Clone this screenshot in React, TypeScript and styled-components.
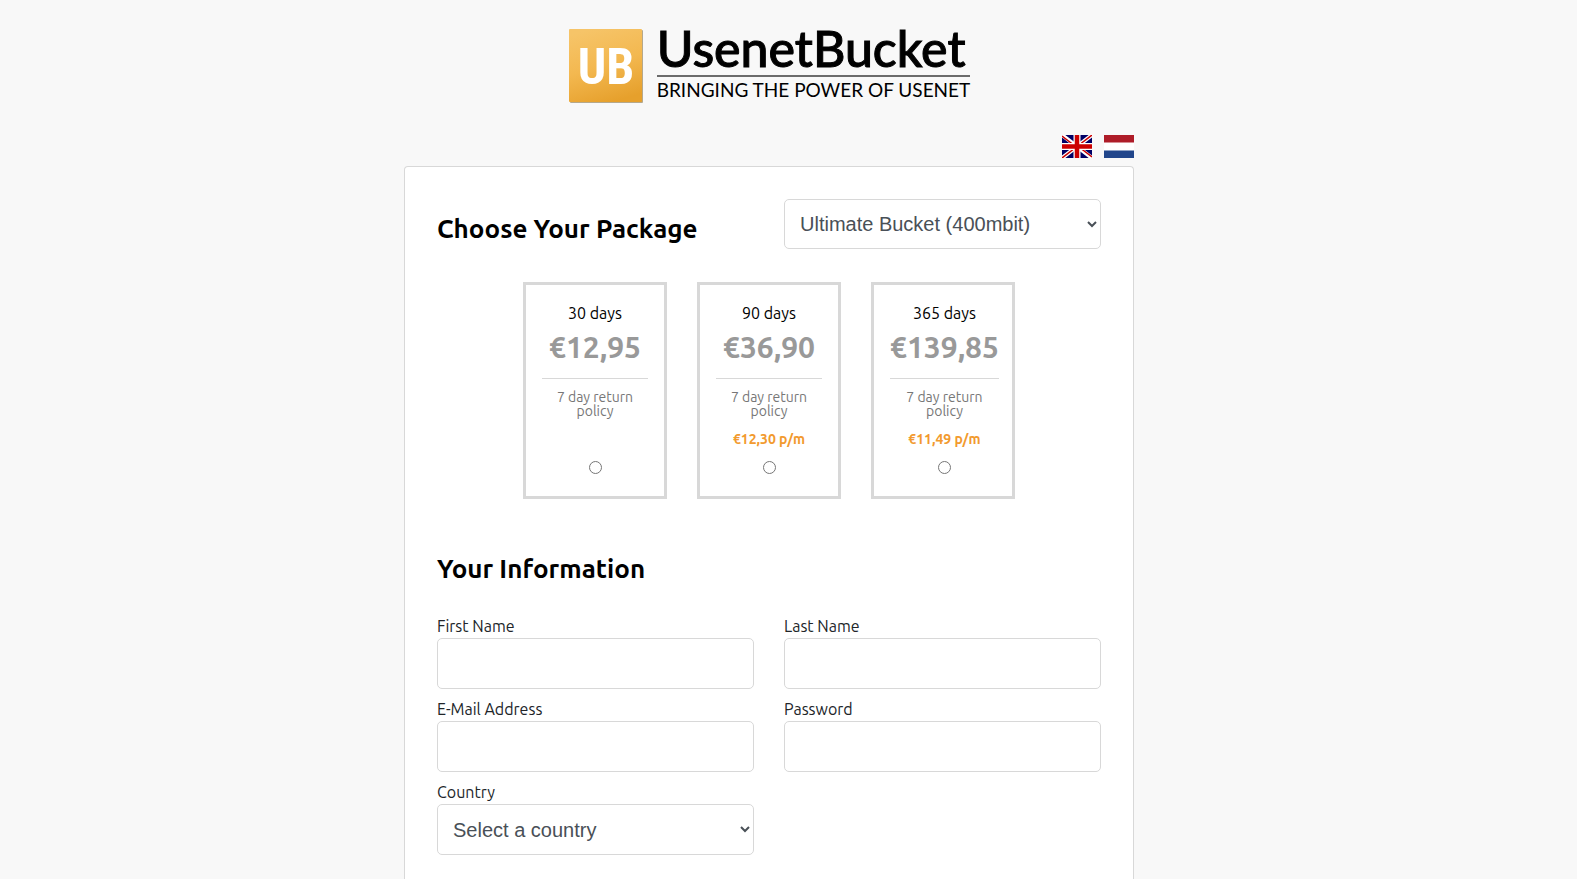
import React, { useState } from "react";
import styled, { createGlobalStyle } from "styled-components";

const GlobalStyle = createGlobalStyle`
  *, *::before, *::after { box-sizing: border-box; }
  body {
    margin: 0;
    background: #f8f8f8;
    color: #212529;
    font-family: Ubuntu, "Noto Sans", "Open Sans", sans-serif;
    font-size: 16px;
    line-height: 24px;
  }
`;

const Page = styled.div`
  display: flex;
  flex-direction: column;
  align-items: center;
  min-height: 100vh;
  padding: 28px 39px 0 0;
`;

const Brand = styled.a`
  display: flex;
  gap: 14px;
  color: #000;
  text-decoration: none;
`;

const BrandMark = styled.svg`
  display: block;
  width: 75px;
  height: 75px;
`;

const BrandInitials = styled.text`
  fill: #fff;
  font-family: "Liberation Sans Narrow", "Roboto Condensed", "Liberation Sans", sans-serif;
  font-size: 50px;
  font-weight: 700;
  text-anchor: middle;
`;

const BrandText = styled.span`
  display: flex;
  flex-direction: column;
  font-family: Lato, sans-serif;
  white-space: nowrap;
`;

const BrandName = styled.span`
  padding-bottom: 6px;
  border-bottom: 2px solid #6b6b6b;
  font-size: 50px;
  font-weight: 500;
  line-height: 41px;
  -webkit-text-stroke: 1px #000;
`;

const BrandTagline = styled.span`
  margin-top: 3px;
  font-size: 19px;
  font-weight: 400;
  line-height: 20px;
`;

const Container = styled.div`
  display: flex;
  flex: 1;
  flex-direction: column;
  width: 100%;
  max-width: 730px;
`;

const Languages = styled.nav`
  display: flex;
  justify-content: flex-end;
  gap: 12px;
  margin: 32px 0 8px;
`;

const LanguageLink = styled.a`
  display: block;
  width: 30px;
  height: 23px;

  svg { display: block; }
`;

const Card = styled.form`
  flex: 1;
  padding: 32px 32px 24px;
  border: 1px solid #d8d8d8;
  border-bottom: 0;
  border-radius: 4px 4px 0 0;
  background: #fff;
`;

const Columns = styled.div`
  display: grid;
  grid-template-columns: 1fr 1fr;
  gap: 8px 30px;
`;

const Heading = styled.h2`
  margin: 0;
  color: #000;
  font-size: 26px;
  font-weight: 700;
  line-height: 30px;
`;

const PackageHeading = styled(Heading)`
  padding-top: 15px;
`;

const Control = styled.input`
  display: block;
  width: 100%;
  height: 51px;
  padding: 0 15px;
  border: 1px solid #d8d8d8;
  border-radius: 5px;
  background: #fff;
  color: #495057;
  font-family: "Liberation Sans", Arial, sans-serif;
  font-size: 20px;
`;

const SelectControl = styled(Control)`
  padding: 0 0 0 11px;
`;

const PackageSelect = styled(SelectControl)`
  height: 50px;
`;

const Plans = styled.div`
  display: flex;
  justify-content: center;
  gap: 30px;
  margin: 33px 0 55px;
`;

const Plan = styled.label`
  display: grid;
  grid-template-columns: 1fr;
  align-content: start;
  width: 144px;
  height: 217px;
  padding: 16px;
  border: 3px solid #d8d8d8;
  text-align: center;
  cursor: pointer;
`;

const Duration = styled.span`
  color: #000;
  line-height: 24px;
`;

const Price = styled.span`
  padding: 5px 0 13px;
  border-bottom: 1px solid #d8d8d8;
  color: #999;
  font-size: 30px;
  font-weight: 700;
  line-height: 35px;
`;

const Policy = styled.span`
  padding: 11px 0 14px;
  color: #777;
  font-size: 14px;
  line-height: 14px;
`;

const Monthly = styled.span`
  height: 14px;
  color: #f29a2e;
  font-size: 14px;
  font-weight: 700;
  line-height: 14px;
`;

const Radio = styled.input`
  width: 13px;
  height: 13px;
  margin: 15px auto 0;
`;

const Fields = styled(Columns)`
  margin-top: 30px;
`;

const Label = styled.label`
  display: block;
`;

const plans = [
  { days: 30, price: "€12,95", monthly: "" },
  { days: 90, price: "€36,90", monthly: "€12,30 p/m" },
  { days: 365, price: "€139,85", monthly: "€11,49 p/m" },
];

const fields = [
  { id: "first-name", label: "First Name", type: "text" },
  { id: "last-name", label: "Last Name", type: "text" },
  { id: "email", label: "E-Mail Address", type: "email" },
  { id: "password", label: "Password", type: "password" },
];

function Logo() {
  return (
    <BrandMark viewBox="0 0 75 75" aria-hidden="true">
      <defs>
        <linearGradient id="gold" x1="0.3" y1="0" x2="0.6" y2="1">
          <stop offset="0" stopColor="#f6c468" />
          <stop offset="0.5" stopColor="#f3b850" />
          <stop offset="1" stopColor="#e6a02c" />
        </linearGradient>
      </defs>
      <rect x="2" y="2" width="73" height="73" rx="1" fill="#b5a88c" />
      <rect x="1" y="1" width="73" height="73" rx="1" fill="url(#gold)" />
      <BrandInitials x="38" y="56">UB</BrandInitials>
    </BrandMark>
  );
}

function BritishFlag() {
  return (
    <svg width="30" height="23" viewBox="0 0 30 23" aria-hidden="true">
      <rect width="30" height="23" fill="#006" />
      <path d="M0 0L30 23M30 0L0 23" stroke="#fff" strokeWidth="4" />
      <path d="M0 1L15 12.500M30 22L15 10.500M30 0L15 11.500M0 23L15 11.500" stroke="#c00" strokeWidth="1.500" />
      <path d="M15 0V23M0 11.500H30" stroke="#fff" strokeWidth="7" />
      <path d="M15 0V23M0 11.500H30" stroke="#c00" strokeWidth="4.500" />
    </svg>
  );
}

function DutchFlag() {
  return (
    <svg width="30" height="23" viewBox="0 0 30 23" aria-hidden="true">
      <rect width="30" height="23" fill="#fff" />
      <rect width="30" height="7.500" fill="#ae1c28" />
      <rect y="15.500" width="30" height="7.500" fill="#21468b" />
    </svg>
  );
}

export default function App() {
  const [plan, setPlan] = useState<number | null>(null);

  return (
    <>
      <GlobalStyle />
      <Page>
        <Brand href="#">
          <Logo />
          <BrandText>
            <BrandName>UsenetBucket</BrandName>
            <BrandTagline>BRINGING THE POWER OF USENET</BrandTagline>
          </BrandText>
        </Brand>
        <Container>
          <Languages aria-label="Language">
            <LanguageLink href="#en" aria-label="English"><BritishFlag /></LanguageLink>
            <LanguageLink href="#nl" aria-label="Nederlands"><DutchFlag /></LanguageLink>
          </Languages>
          <Card>
            <Columns>
              <PackageHeading id="package-heading">Choose Your Package</PackageHeading>
              <PackageSelect as="select" aria-labelledby="package-heading">
                <option>Ultimate Bucket (400mbit)</option>
              </PackageSelect>
            </Columns>
            <Plans role="radiogroup" aria-labelledby="package-heading">
              {plans.map(({ days, price, monthly }) => (
                <Plan key={days}>
                  <Duration>{days} days</Duration>
                  <Price>{price}</Price>
                  <Policy>7 day return policy</Policy>
                  <Monthly>{monthly}</Monthly>
                  <Radio
                    type="radio"
                    name="plan"
                    checked={plan === days}
                    onChange={() => setPlan(days)}
                  />
                </Plan>
              ))}
            </Plans>
            <Heading>Your Information</Heading>
            <Fields>
              {fields.map(({ id, label, type }) => (
                <div key={id}>
                  <Label htmlFor={id}>{label}</Label>
                  <Control id={id} type={type} />
                </div>
              ))}
              <div>
                <Label htmlFor="country">Country</Label>
                <SelectControl as="select" id="country">
                  <option>Select a country</option>
                </SelectControl>
              </div>
            </Fields>
          </Card>
        </Container>
      </Page>
    </>
  );
}
